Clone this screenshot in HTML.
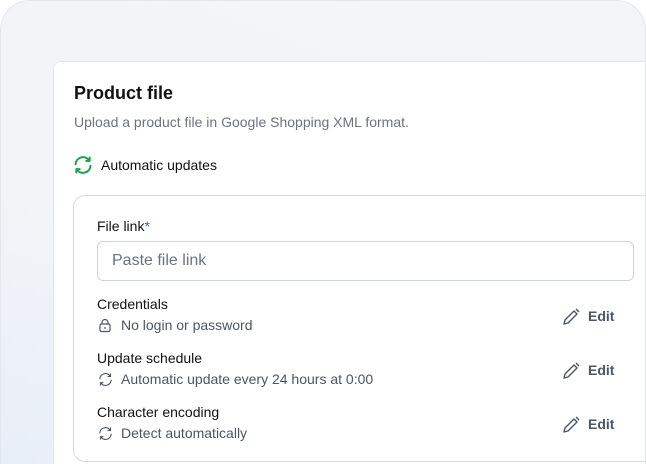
<!DOCTYPE html>
<html style="height:464px;overflow:hidden"><head><style>
*{margin:0;padding:0;box-sizing:border-box}
body{width:646px;height:464px;overflow:hidden;background:#fff;font-family:"Liberation Sans",Arial,sans-serif;position:relative}
.frame{position:absolute;left:0;top:0;width:646px;height:464px;border:1px solid #e3e6ec;border-bottom:none;border-radius:30px 30px 0 0;background:linear-gradient(20deg,#e8eef8 0%,#f2f4f7 40%,#f4f5f7 100%);overflow:hidden}
.card{position:absolute;left:52px;top:60px;width:594px;height:404px;background:#fff;border:1px solid #e4e7ec;border-right:none;border-bottom:none;border-radius:8px 0 0 0;overflow:hidden}
.t{position:absolute;white-space:nowrap}
h1{position:absolute;left:20px;top:21px;font-size:18px;font-weight:700;color:#111;}
.box{position:absolute;left:19px;top:133px;width:620px;height:267px;border:1px solid #d5d9e0;border-radius:12px}
.input{position:absolute;left:23px;top:45px;width:537px;height:40px;border:1px solid #cfd3da;border-radius:6px;font-size:16px;color:#6b7280;padding:10px 14px}
.lab{font-size:14px;color:#111}
.sub{font-size:14px;color:#4b5563}
.edit{font-size:14px;font-weight:700;color:#4b5563}
</style></head><body>
<div class="frame">
<div class="card">
<h1>Product file</h1>
<div class="t" style="left:20px;top:52px;font-size:14px;color:#6b7280">Upload a product file in Google Shopping XML format.</div>
<svg class="t" style="left:19px;top:93px" width="20" height="20" viewBox="0 0 24 24" fill="none" stroke="#16a34a" stroke-width="2.4" stroke-linecap="round" stroke-linejoin="round"><path d="M3 11a9 9 0 0 1 16-5"/><path d="M20 3v4h-4"/><path d="M21 13a9 9 0 0 1-16 5"/><path d="M4 21v-4h4"/></svg>
<div class="t" style="left:47px;top:95px;font-size:14px;color:#111">Automatic updates</div>
<div class="box">
<div class="t lab" style="left:23px;top:22px">File link<span style="color:#2563eb">*</span></div>
<div class="input">Paste file link</div>
<div class="t lab" style="left:23px;top:100px">Credentials</div>
<svg class="t" style="left:24px;top:122px" width="14" height="15" viewBox="0 0 14 15" fill="none" stroke="#4b5563" stroke-width="1.2"><rect x="2" y="6" width="10" height="7.5" rx="1.5"/><path d="M4 6V4.5a3 3 0 0 1 6 0V6"/><path d="M7 9v2"/></svg>
<div class="t sub" style="left:47px;top:121px">No login or password</div>
<div class="t lab" style="left:23px;top:154px">Update schedule</div>
<svg class="t" style="left:24px;top:176px" width="15" height="15" viewBox="0 0 24 24" fill="none" stroke="#4b5563" stroke-width="1.8" stroke-linecap="round"><path d="M3 11a9 9 0 0 1 16-5"/><path d="M20 3v4h-4"/><path d="M21 13a9 9 0 0 1-16 5"/><path d="M4 21v-4h4"/></svg>
<div class="t sub" style="left:47px;top:175px">Automatic update every 24 hours at 0:00</div>
<div class="t lab" style="left:23px;top:208px">Character encoding</div>
<svg class="t" style="left:24px;top:230px" width="15" height="15" viewBox="0 0 24 24" fill="none" stroke="#4b5563" stroke-width="1.8" stroke-linecap="round"><path d="M3 11a9 9 0 0 1 16-5"/><path d="M20 3v4h-4"/><path d="M21 13a9 9 0 0 1-16 5"/><path d="M4 21v-4h4"/></svg>
<div class="t sub" style="left:47px;top:229px">Detect automatically</div>
<svg class="t" style="left:487px;top:111px" width="20" height="20" viewBox="0 0 20 20" fill="none" stroke="#4b5563" stroke-width="1.4" stroke-linejoin="round"><path d="M3 17l1-4L13 4l3 3-9 9z"/><path d="M15 2l3 3"/></svg>
<div class="t edit" style="left:514px;top:112px">Edit</div>
<svg class="t" style="left:487px;top:165px" width="20" height="20" viewBox="0 0 20 20" fill="none" stroke="#4b5563" stroke-width="1.4" stroke-linejoin="round"><path d="M3 17l1-4L13 4l3 3-9 9z"/><path d="M15 2l3 3"/></svg>
<div class="t edit" style="left:514px;top:166px">Edit</div>
<svg class="t" style="left:487px;top:219px" width="20" height="20" viewBox="0 0 20 20" fill="none" stroke="#4b5563" stroke-width="1.4" stroke-linejoin="round"><path d="M3 17l1-4L13 4l3 3-9 9z"/><path d="M15 2l3 3"/></svg>
<div class="t edit" style="left:514px;top:220px">Edit</div>
</div>
</div>
</div>
</body></html>
